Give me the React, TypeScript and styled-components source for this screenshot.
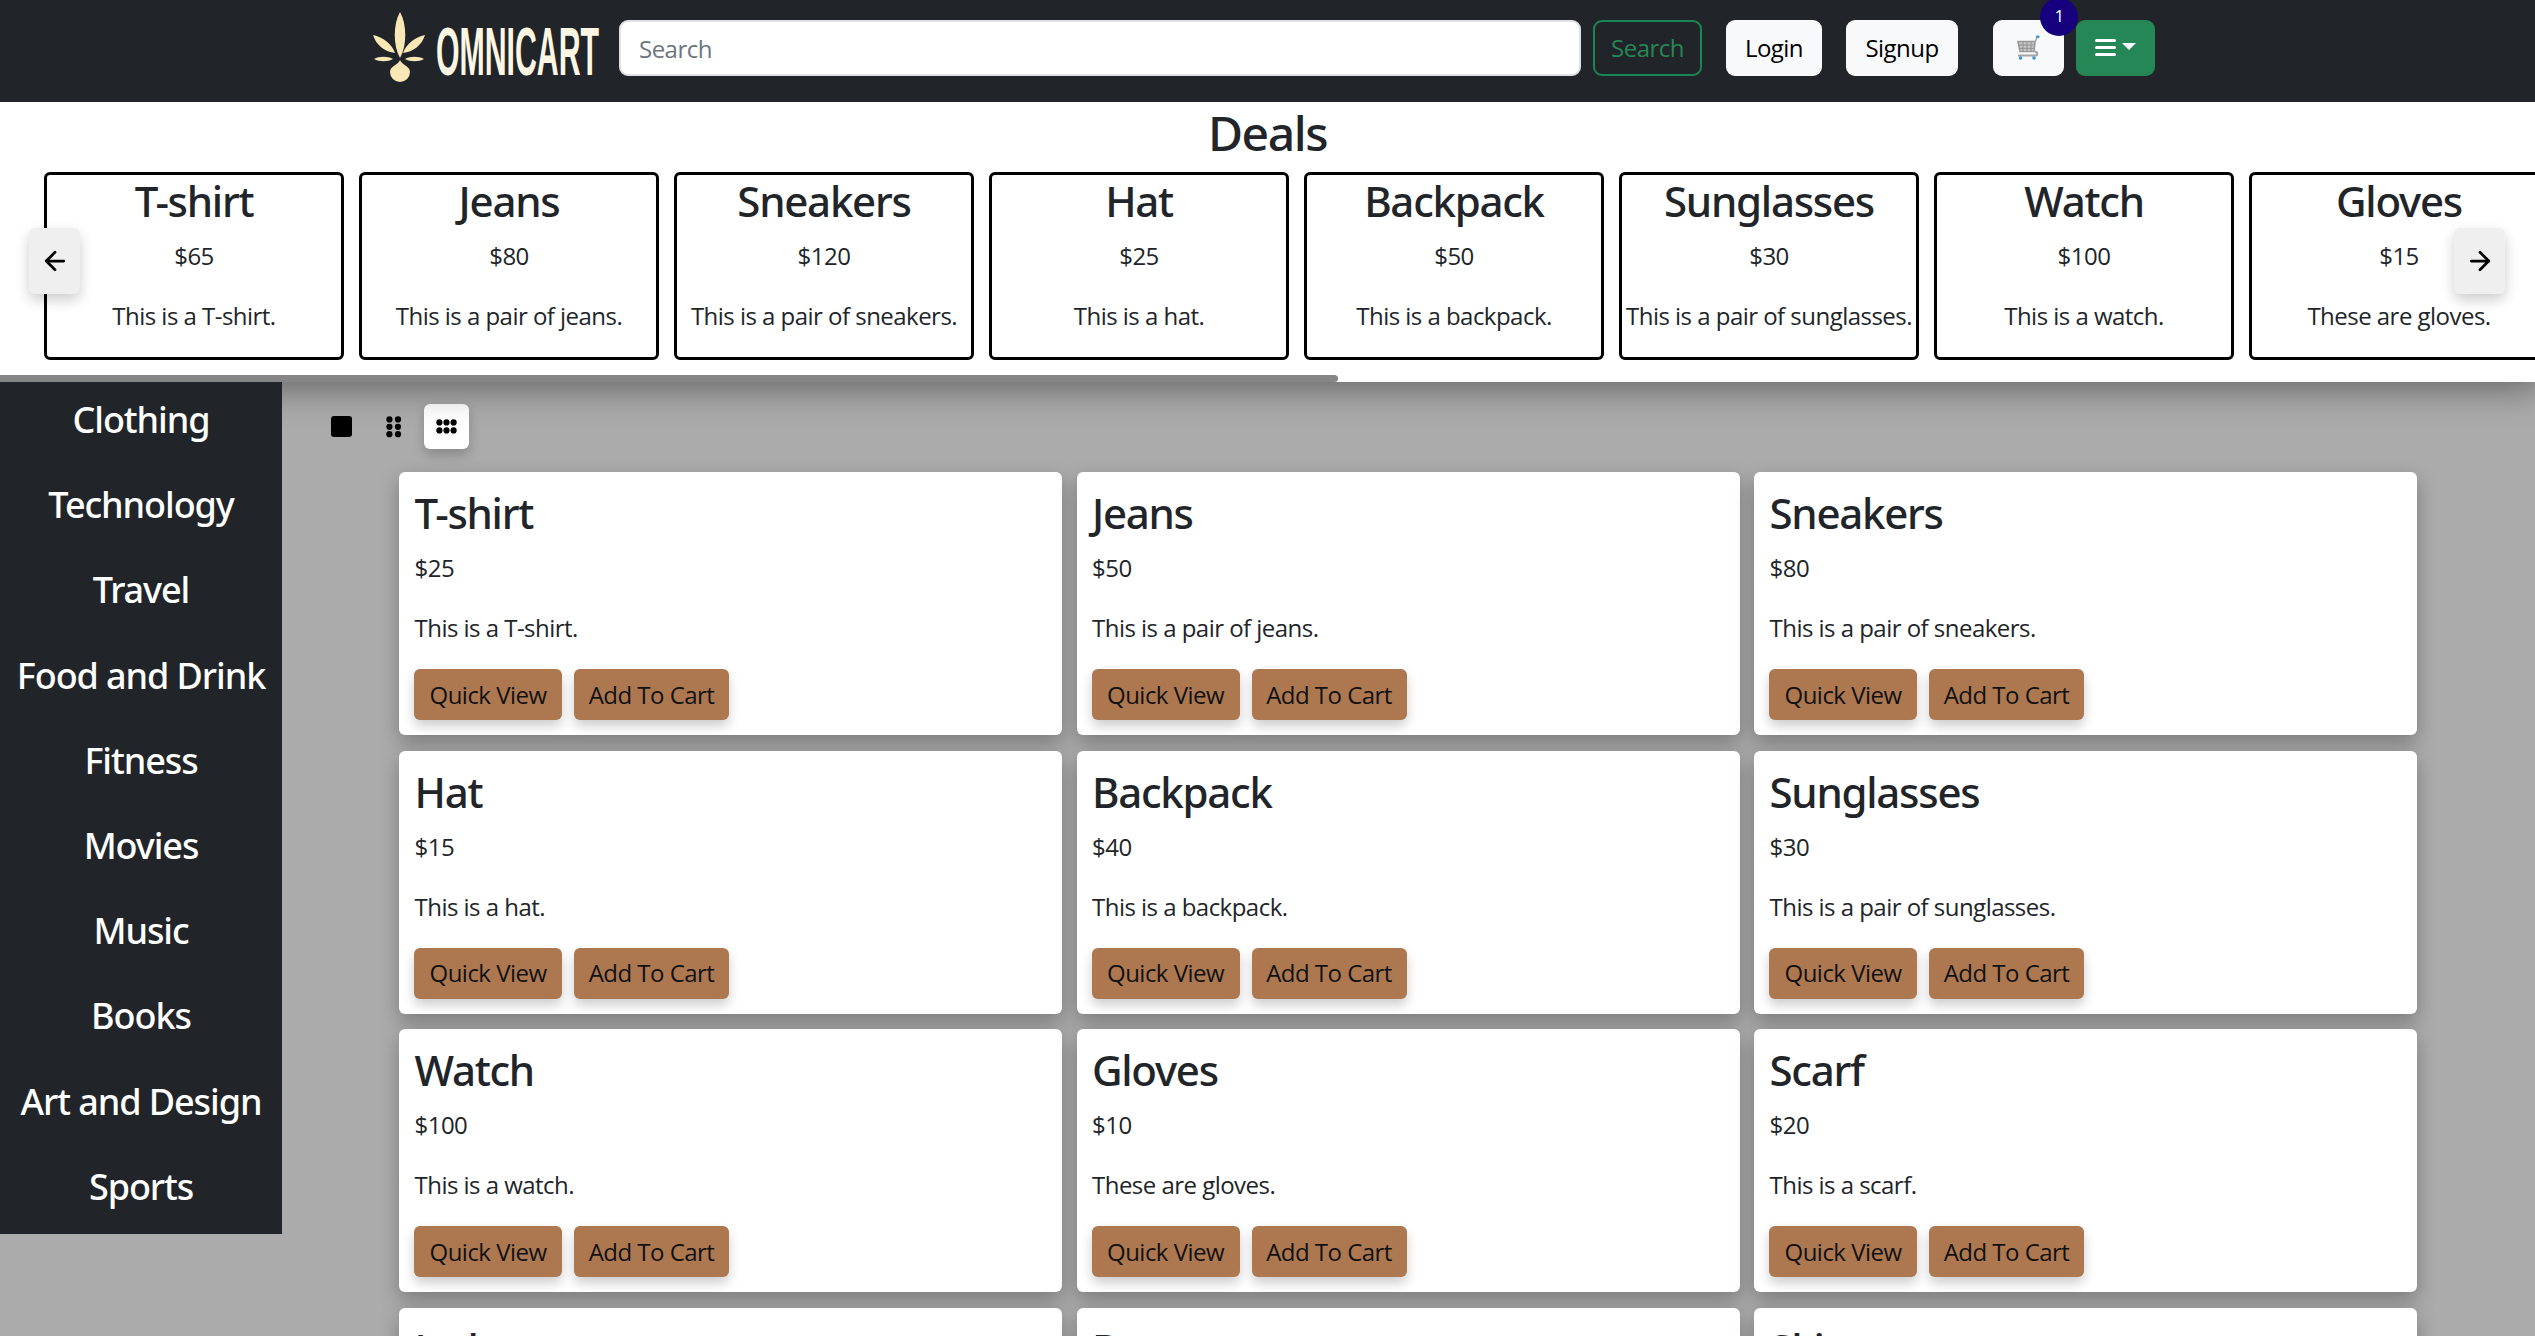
import { ArrowLeft, ArrowRight } from "lucide-react";
import styled, { createGlobalStyle } from "styled-components";

const GlobalStyle = createGlobalStyle`
  html, body {
    margin: 0;
    height: 100%;
    overflow: hidden;
    background: #ababab;
    font-family: "Open Sans", "Noto Sans", sans-serif;
    font-size: 24px;
    line-height: 36px;
    letter-spacing: -0.022em;
    color: #212529;
  }
  * { box-sizing: border-box; }
`;

const Navbar = styled.header`
  position: relative;
  z-index: 3;
  height: 102px;
  background: #212529;
  display: flex;
  align-items: flex-start;
  padding: 20px 0 0 373px;
`;

const Brand = styled.a`
  display: flex;
  align-items: flex-start;
  width: 246px;
  margin-top: -8px;
  gap: 11px;
`;

const Wordmark = styled.span`
  display: block;
  width: 162px;
  margin-top: 12px;
  font-family: "Liberation Sans", sans-serif;
  font-size: 68px;
  font-weight: 700;
  line-height: 54px;
  letter-spacing: 0;
  color: #fdf6e3;
  white-space: nowrap;
  transform: scaleX(0.445);
  transform-origin: left center;
`;

const SearchInput = styled.input`
  width: 962px;
  height: 56px;
  padding: 9px 18px;
  border: 2px solid #dee2e6;
  border-radius: 9px;
  background: #fff;
  font: inherit;
  letter-spacing: inherit;
  color: #212529;
  &::placeholder { color: #6c757d; opacity: 1; }
`;

const NavButton = styled.button<{ $w: number; $ml: number; $variant?: "outline" | "light" | "green" }>`
  position: relative;
  width: ${(p) => p.$w}px;
  height: 56px;
  margin-left: ${(p) => p.$ml}px;
  padding: 0;
  border-radius: 9px;
  font: inherit;
  letter-spacing: inherit;
  display: flex;
  align-items: center;
  justify-content: center;
  border: ${(p) => (p.$variant === "outline" ? "2px solid #198754" : "none")};
  background: ${(p) =>
    p.$variant === "outline" ? "transparent" : p.$variant === "green" ? "#258755" : "#f8f9fa"};
  color: ${(p) => (p.$variant === "outline" ? "#258755" : "#000")};
`;

const Badge = styled.span`
  position: absolute;
  top: -22px;
  right: -14px;
  width: 38px;
  height: 38px;
  padding-top: 4px;
  border-radius: 50%;
  background: #16007e;
  color: #fff;
  font-size: 17px;
  line-height: 28px;
  text-align: center;
`;

const Deals = styled.section`
  position: relative;
  z-index: 1;
  height: 280px;
  background: #fff;
  overflow: hidden;
`;

const DealsWrap = styled.div`
  position: relative;
  z-index: 1;
  box-shadow: 0 0 34px 6px rgba(0, 0, 0, 0.42);
`;

const DealsTitle = styled.h2`
  margin: 0;
  height: 70px;
  padding-top: 2px;
  font-family: "Noto Sans", sans-serif;
  font-size: 48px;
  line-height: 58px;
  font-weight: 500;
  letter-spacing: -0.03em;
  text-align: center;
`;

const DealRow = styled.div`
  display: flex;
  gap: 15px;
  padding-left: 44px;
`;

const DealCard = styled.article`
  flex: 0 0 300px;
  height: 188px;
  padding-top: 1px;
  border: 3px solid #000;
  border-radius: 6px;
  text-align: center;
`;

const DealName = styled.h3`
  margin: 0 0 12px;
  font-family: "Noto Sans", sans-serif;
  font-size: 42px;
  line-height: 50px;
  font-weight: 500;
  letter-spacing: -0.03em;
`;

const Text = styled.p`
  margin: 0 0 24px;
  white-space: nowrap;
`;

const ScrollThumb = styled.div`
  position: absolute;
  left: 0;
  bottom: 0;
  width: 1338px;
  height: 7px;
  border-radius: 0 4px 4px 0;
  background: #868686;
`;

const ArrowButton = styled.button<{ $side: "left" | "right" }>`
  position: absolute;
  top: 126px;
  ${(p) => (p.$side === "left" ? "left: 29px;" : "right: 30px;")}
  width: 51px;
  height: 66px;
  padding: 0;
  border: none;
  border-radius: 6px;
  background: #efefef;
  color: #000;
  box-shadow: 0 6px 14px rgba(0, 0, 0, 0.2);
  display: flex;
  align-items: center;
  justify-content: center;
`;

const Body = styled.div`
  display: flex;
  align-items: flex-start;
`;

const Sidebar = styled.nav`
  position: relative;
  z-index: 2;
  flex: 0 0 282px;
  background: #212529;
`;

const SideItem = styled.h4`
  margin: 0;
  padding: 16px 0 26px;
  font-family: "Noto Sans", sans-serif;
  font-size: 36px;
  line-height: 43.2px;
  font-weight: 500;
  letter-spacing: -0.03em;
  color: #fff;
  text-align: center;
  white-space: nowrap;
`;

const Main = styled.main`
  flex: 1;
  padding: 22px 0 0 37px;
`;

const ViewBar = styled.div`
  display: flex;
  gap: 7.5px;
  margin-bottom: 23px;
`;

const ViewButton = styled.button<{ $active?: boolean }>`
  width: 45px;
  height: 45px;
  padding: 0;
  border: none;
  border-radius: 6px;
  background: ${(p) => (p.$active ? "#fff" : "transparent")};
  box-shadow: ${(p) => (p.$active ? "0 6px 12px rgba(0, 0, 0, 0.2)" : "none")};
  display: flex;
  align-items: center;
  justify-content: center;
`;

const ProductGrid = styled.div`
  display: grid;
  grid-template-columns: repeat(3, 663px);
  gap: 15.5px 14.5px;
  margin-left: 80px;
`;

const ProductCard = styled.article`
  height: 263px;
  padding: 16px 15.5px;
  border-radius: 6px;
  background: #fff;
  box-shadow: 0 8px 20px rgba(0, 0, 0, 0.28);
`;

const ActionRow = styled.div`
  display: flex;
  gap: 12px;
  margin: -1px 0 0 -0.5px;
`;

const ActionButton = styled.button<{ $w: number }>`
  width: ${(p) => p.$w}px;
  height: 51px;
  padding: 0;
  border: none;
  border-radius: 6px;
  background: #ad7850;
  color: #111;
  font: inherit;
  letter-spacing: inherit;
  box-shadow: 0 6px 12px rgba(0, 0, 0, 0.2);
  white-space: nowrap;
`;

const dealItems = [
  { name: "T-shirt", price: 65, text: "This is a T-shirt." },
  { name: "Jeans", price: 80, text: "This is a pair of jeans." },
  { name: "Sneakers", price: 120, text: "This is a pair of sneakers." },
  { name: "Hat", price: 25, text: "This is a hat." },
  { name: "Backpack", price: 50, text: "This is a backpack." },
  { name: "Sunglasses", price: 30, text: "This is a pair of sunglasses." },
  { name: "Watch", price: 100, text: "This is a watch." },
  { name: "Gloves", price: 15, text: "These are gloves." },
];

const products = [
  { name: "T-shirt", price: 25, text: "This is a T-shirt." },
  { name: "Jeans", price: 50, text: "This is a pair of jeans." },
  { name: "Sneakers", price: 80, text: "This is a pair of sneakers." },
  { name: "Hat", price: 15, text: "This is a hat." },
  { name: "Backpack", price: 40, text: "This is a backpack." },
  { name: "Sunglasses", price: 30, text: "This is a pair of sunglasses." },
  { name: "Watch", price: 100, text: "This is a watch." },
  { name: "Gloves", price: 10, text: "These are gloves." },
  { name: "Scarf", price: 20, text: "This is a scarf." },
  { name: "Jacket", price: 60, text: "This is a jacket." },
  { name: "Dress", price: 45, text: "This is a dress." },
  { name: "Skirt", price: 35, text: "This is a skirt." },
];

const categories = [
  "Clothing",
  "Technology",
  "Travel",
  "Food and Drink",
  "Fitness",
  "Movies",
  "Music",
  "Books",
  "Art and Design",
  "Sports",
];

const LogoMark = () => (
  <svg width="52" height="70" viewBox="0 0 52 70" fill="#f9e8b5">
    <path d="M27 0C34 12 34 34 27 46C20 34 20 12 27 0Z" />
    <path d="M0 23C10 25 19 32 22 41C12 40 3 33 0 23Z" />
    <path d="M52 23C42 25 33 32 30 41C40 40 49 33 52 23Z" />
    <path d="M1 47C6 44 15 44 20 47C15 50 6 50 1 47Z" />
    <path d="M51 47C46 44 37 44 32 47C37 50 46 50 51 47Z" />
    <path d="M27 48C29 53 37 54 37 60A10 10 0 1 1 17 60C17 54 25 53 27 48Z" />
  </svg>
);

const CartIcon = () => (
  <svg width="26" height="26" viewBox="0 0 26 26" fill="none">
    <path d="M2 6.5H19L18 16.5H4Z" fill="#c9c9c9" stroke="#9a9a9a" strokeWidth="1.6" />
    <path d="M7 6.5V16.5M11 6.5V16.5M15 6.5V16.5M2.5 10H18.5M3 13.3H18" stroke="#8f8f8f" strokeWidth="1" />
    <path d="M19 16.5C22 17 22 20.5 19 20.5H2" stroke="#a5a5a5" strokeWidth="2" />
    <path d="M18.5 8L21 2.5" stroke="#a5a5a5" strokeWidth="1.6" />
    <rect x="20" y="0.5" width="3.5" height="2.5" rx="1" fill="#3f92d8" />
    <circle cx="4.5" cy="23" r="1.8" fill="#3f92d8" />
    <circle cx="18" cy="23" r="1.8" fill="#3f92d8" />
  </svg>
);

const MenuIcon = () => (
  <svg width="42" height="20" viewBox="0 0 42 20" fill="#fff">
    <rect x="0" y="1" width="21" height="3" rx="1.5" />
    <rect x="0" y="8" width="21" height="3" rx="1.5" />
    <rect x="0" y="15" width="21" height="3" rx="1.5" />
    <path d="M27 5H41L34 12Z" />
  </svg>
);

const SingleIcon = () => (
  <svg width="21" height="21" viewBox="0 0 21 21">
    <rect width="21" height="21" rx="3" fill="#000" />
  </svg>
);

const dotGrid = (cols: number, rows: number, stepX: number, stepY: number) => {
  const dots = [];
  for (let c = 0; c < cols; c++) {
    for (let r = 0; r < rows; r++) {
      dots.push(
        <circle key={`${c}-${r}`} cx={3.4 + c * stepX} cy={3.4 + r * stepY} r="3.1" fill="#000" />
      );
    }
  }
  return dots;
};

const TwoColIcon = () => (
  <svg width="16" height="22" viewBox="0 0 16 22">
    {dotGrid(2, 3, 8.6, 7.4)}
  </svg>
);

const ThreeColIcon = () => (
  <svg width="21" height="15" viewBox="0 0 21 15">
    {dotGrid(3, 2, 7.1, 8)}
  </svg>
);

const App = () => (
  <>
    <GlobalStyle />
    <Navbar>
      <Brand>
        <LogoMark />
        <Wordmark>OMNICART</Wordmark>
      </Brand>
      <SearchInput placeholder="Search" />
      <NavButton $w={109} $ml={12} $variant="outline">Search</NavButton>
      <NavButton $w={96} $ml={24}>Login</NavButton>
      <NavButton $w={112} $ml={24}>Signup</NavButton>
      <NavButton $w={71} $ml={35}>
        <CartIcon />
        <Badge>1</Badge>
      </NavButton>
      <NavButton $w={79} $ml={12} $variant="green">
        <MenuIcon />
      </NavButton>
    </Navbar>
    <DealsWrap>
      <Deals>
        <DealsTitle>Deals</DealsTitle>
        <DealRow>
          {dealItems.map((d) => (
            <DealCard key={d.name}>
              <DealName>{d.name}</DealName>
              <Text>${d.price}</Text>
              <Text>{d.text}</Text>
            </DealCard>
          ))}
        </DealRow>
        <ArrowButton $side="left"><ArrowLeft size={30} strokeWidth={2.2} /></ArrowButton>
        <ArrowButton $side="right"><ArrowRight size={30} strokeWidth={2.2} /></ArrowButton>
        <ScrollThumb />
      </Deals>
    </DealsWrap>
    <Body>
      <Sidebar>
        {categories.map((c) => (
          <SideItem key={c}>{c}</SideItem>
        ))}
      </Sidebar>
      <Main>
        <ViewBar>
          <ViewButton><SingleIcon /></ViewButton>
          <ViewButton><TwoColIcon /></ViewButton>
          <ViewButton $active><ThreeColIcon /></ViewButton>
        </ViewBar>
        <ProductGrid>
          {products.map((p) => (
            <ProductCard key={p.name}>
              <DealName>{p.name}</DealName>
              <Text>${p.price}</Text>
              <Text>{p.text}</Text>
              <ActionRow>
                <ActionButton $w={148}>Quick View</ActionButton>
                <ActionButton $w={155}>Add To Cart</ActionButton>
              </ActionRow>
            </ProductCard>
          ))}
        </ProductGrid>
      </Main>
    </Body>
  </>
);

export default App;
